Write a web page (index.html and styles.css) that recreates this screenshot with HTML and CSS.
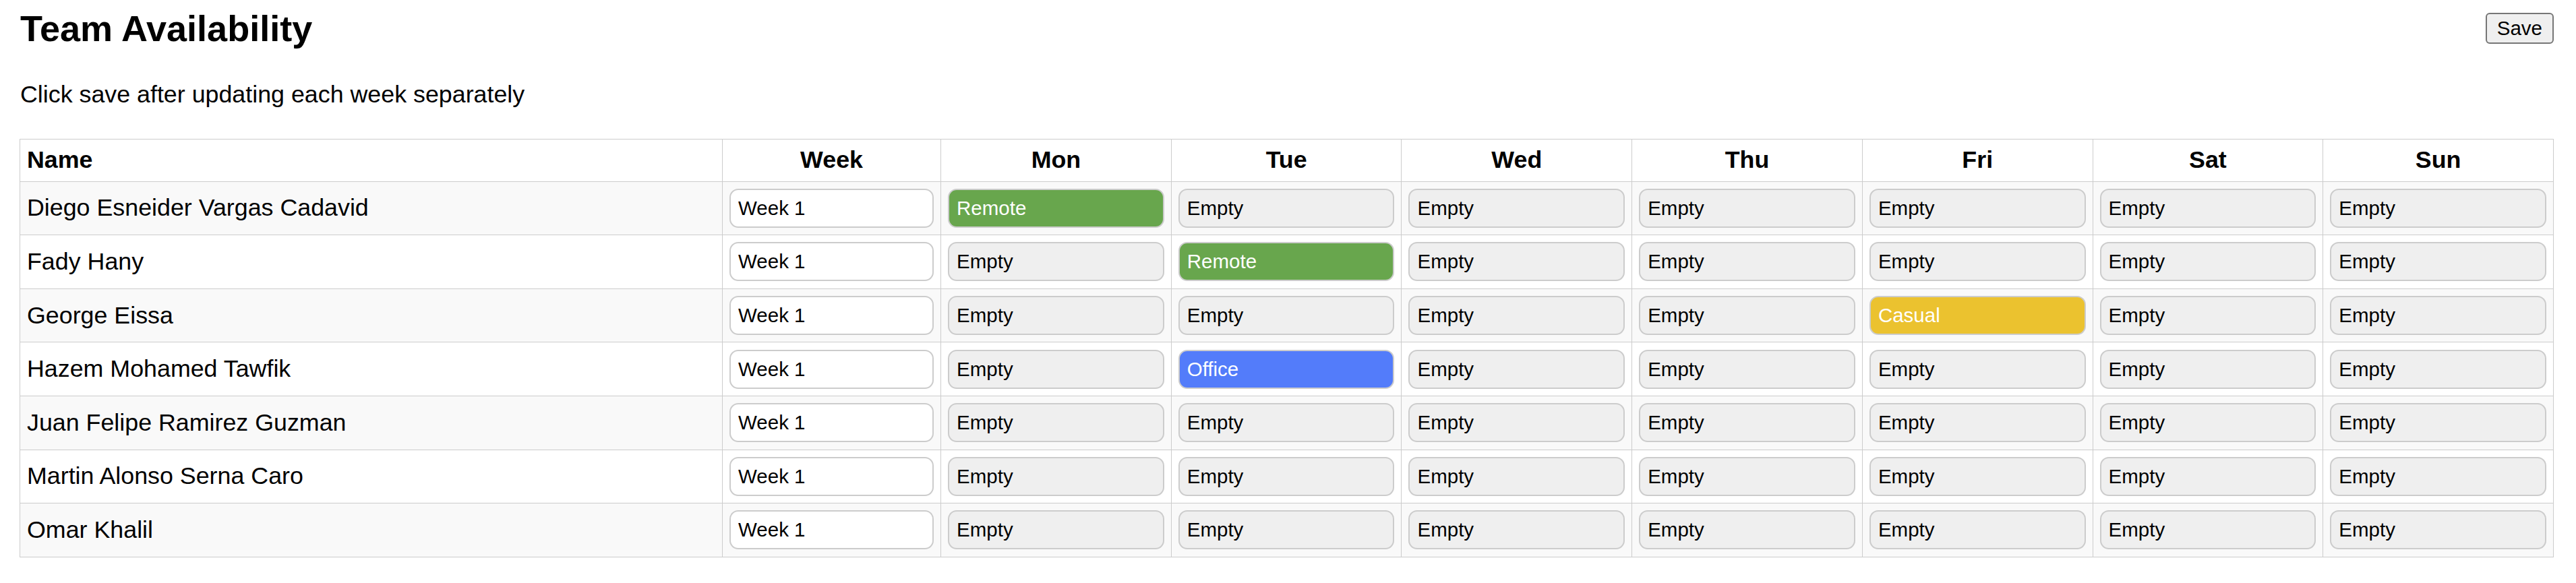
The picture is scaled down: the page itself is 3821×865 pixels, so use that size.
FILE: index.html
```html
<!DOCTYPE html>
<html lang="en">
<head>
<meta charset="utf-8">
<title>Team Availability</title>
<link rel="stylesheet" href="styles.css">
</head>
<body>
<div class="page">
  <header class="topbar">
    <h1 class="title">Team Availability</h1>
    <button class="save-btn" type="button">Save</button>
  </header>
  <p class="hint">Click save after updating each week separately</p>
  <table class="grid">
    <colgroup>
      <col class="col-name">
      <col class="col-week">
      <col class="col-day" span="7">
    </colgroup>
    <thead>
      <tr>
        <th class="th-name">Name</th>
        <th>Week</th>
        <th>Mon</th>
        <th>Tue</th>
        <th>Wed</th>
        <th>Thu</th>
        <th>Fri</th>
        <th>Sat</th>
        <th>Sun</th>
      </tr>
    </thead>
    <tbody>
      <tr>
        <td class="name">Diego Esneider Vargas Cadavid</td>
        <td><input class="week-input" type="text" value="Week 1"></td>
        <td><button class="slot slot-remote" type="button">Remote</button></td>
        <td><button class="slot" type="button">Empty</button></td>
        <td><button class="slot" type="button">Empty</button></td>
        <td><button class="slot" type="button">Empty</button></td>
        <td><button class="slot" type="button">Empty</button></td>
        <td><button class="slot" type="button">Empty</button></td>
        <td><button class="slot" type="button">Empty</button></td>
      </tr>
      <tr>
        <td class="name">Fady Hany</td>
        <td><input class="week-input" type="text" value="Week 1"></td>
        <td><button class="slot" type="button">Empty</button></td>
        <td><button class="slot slot-remote" type="button">Remote</button></td>
        <td><button class="slot" type="button">Empty</button></td>
        <td><button class="slot" type="button">Empty</button></td>
        <td><button class="slot" type="button">Empty</button></td>
        <td><button class="slot" type="button">Empty</button></td>
        <td><button class="slot" type="button">Empty</button></td>
      </tr>
      <tr>
        <td class="name">George Eissa</td>
        <td><input class="week-input" type="text" value="Week 1"></td>
        <td><button class="slot" type="button">Empty</button></td>
        <td><button class="slot" type="button">Empty</button></td>
        <td><button class="slot" type="button">Empty</button></td>
        <td><button class="slot" type="button">Empty</button></td>
        <td><button class="slot slot-casual" type="button">Casual</button></td>
        <td><button class="slot" type="button">Empty</button></td>
        <td><button class="slot" type="button">Empty</button></td>
      </tr>
      <tr>
        <td class="name">Hazem Mohamed Tawfik</td>
        <td><input class="week-input" type="text" value="Week 1"></td>
        <td><button class="slot" type="button">Empty</button></td>
        <td><button class="slot slot-office" type="button">Office</button></td>
        <td><button class="slot" type="button">Empty</button></td>
        <td><button class="slot" type="button">Empty</button></td>
        <td><button class="slot" type="button">Empty</button></td>
        <td><button class="slot" type="button">Empty</button></td>
        <td><button class="slot" type="button">Empty</button></td>
      </tr>
      <tr>
        <td class="name">Juan Felipe Ramirez Guzman</td>
        <td><input class="week-input" type="text" value="Week 1"></td>
        <td><button class="slot" type="button">Empty</button></td>
        <td><button class="slot" type="button">Empty</button></td>
        <td><button class="slot" type="button">Empty</button></td>
        <td><button class="slot" type="button">Empty</button></td>
        <td><button class="slot" type="button">Empty</button></td>
        <td><button class="slot" type="button">Empty</button></td>
        <td><button class="slot" type="button">Empty</button></td>
      </tr>
      <tr>
        <td class="name">Martin Alonso Serna Caro</td>
        <td><input class="week-input" type="text" value="Week 1"></td>
        <td><button class="slot" type="button">Empty</button></td>
        <td><button class="slot" type="button">Empty</button></td>
        <td><button class="slot" type="button">Empty</button></td>
        <td><button class="slot" type="button">Empty</button></td>
        <td><button class="slot" type="button">Empty</button></td>
        <td><button class="slot" type="button">Empty</button></td>
        <td><button class="slot" type="button">Empty</button></td>
      </tr>
      <tr>
        <td class="name">Omar Khalil</td>
        <td><input class="week-input" type="text" value="Week 1"></td>
        <td><button class="slot" type="button">Empty</button></td>
        <td><button class="slot" type="button">Empty</button></td>
        <td><button class="slot" type="button">Empty</button></td>
        <td><button class="slot" type="button">Empty</button></td>
        <td><button class="slot" type="button">Empty</button></td>
        <td><button class="slot" type="button">Empty</button></td>
        <td><button class="slot" type="button">Empty</button></td>
      </tr>
    </tbody>
  </table>
</div>
</body>
</html>
```

FILE: styles.css
```css
html, body {
  margin: 0;
  padding: 0;
  background: #ffffff;
}

body {
  font-family: "Liberation Sans", Arial, Helvetica, sans-serif;
  font-size: 35.8px;
  color: #000000;
}

.page {
  padding: 11px 33px 0 29px;
}

.topbar {
  display: flex;
  justify-content: space-between;
  align-items: flex-start;
}

.title {
  margin: 0;
  font-size: 54px;
  font-weight: bold;
  line-height: normal;
  padding-left: 1px;
}

.save-btn {
  margin-top: 8px;
  height: 46px;
  padding: 0 15px;
  font-family: "Liberation Sans", Arial, sans-serif;
  font-size: 29.5px;
  color: #000000;
  background: #efefef;
  border: 2px solid #767676;
  border-radius: 6px;
}

.hint {
  margin: 47px 0 45px 1px;
  line-height: normal;
}

.grid {
  width: 100%;
  table-layout: fixed;
  border-collapse: collapse;
}

.col-name { width: 1042px; }
.col-week { width: 324px; }
.col-day { width: 341.7px; }

.grid th,
.grid td {
  border: 1.5px solid #cccccc;
  padding: 10.3px 10px;
  vertical-align: middle;
}

.grid th {
  font-weight: bold;
  text-align: center;
  background: #ffffff;
}

.grid th.th-name {
  text-align: left;
}

.grid tbody tr:nth-child(odd) {
  background: #f9f9f9;
}

.grid tbody tr:nth-child(even) {
  background: #ffffff;
}

.name {
  text-align: left;
}

.week-input,
.slot {
  display: block;
  box-sizing: border-box;
  width: 100%;
  height: 58px;
  margin: 0;
  padding: 0 11px;
  font-family: "Liberation Sans", Arial, sans-serif;
  font-size: 29.5px;
  color: #000000;
  border: 2px solid #cccccc;
  border-radius: 13px;
  text-align: left;
  outline: none;
}

.week-input {
  background: #ffffff;
}

.slot {
  background: #efefef;
}

.slot-remote {
  background: #68a64d;
  color: #ffffff;
}

.slot-casual {
  background: #ebc22f;
  color: #ffffff;
}

.slot-office {
  background: #537cfa;
  color: #ffffff;
}
```
